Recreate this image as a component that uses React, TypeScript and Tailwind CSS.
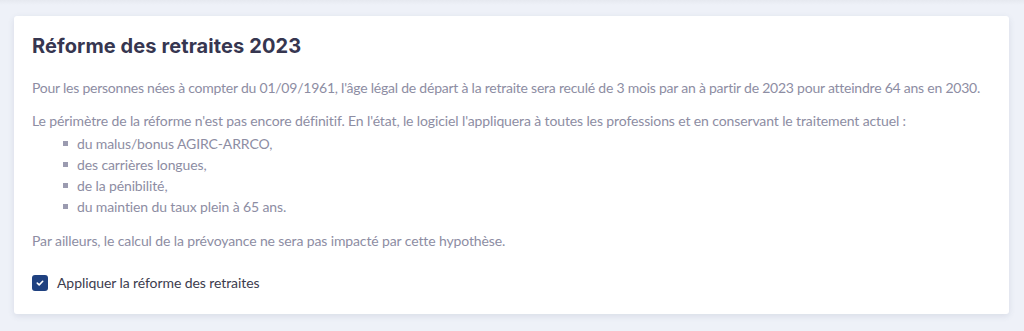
const ITEMS = [
  "du malus/bonus AGIRC-ARRCO,",
  "des carrières longues,",
  "de la pénibilité,",
  "du maintien du taux plein à 65 ans.",
];

export default function App() {
  return (
    <div
      className="relative h-[331px] w-[1024px] overflow-hidden bg-[#eef1f8] pl-[14px] pr-[15px] pt-[16px]"
      style={{ fontFamily: "'Lato', 'Liberation Sans', sans-serif" }}
    >
      <div className="absolute left-0 right-0 top-0 h-[5px] bg-gradient-to-b from-[#e6e9f0] to-transparent" />
      <div className="h-[298px] rounded-[3px] bg-white px-[18px] pt-[16px] shadow-[0_2px_6px_rgba(60,70,110,0.12)]">
        <h2
          className="text-[20px] font-bold leading-[28px] tracking-[0.1px] text-[#363650]"
          style={{ fontFamily: "'Inter', 'Liberation Sans', sans-serif" }}
        >
          Réforme des retraites 2023
        </h2>
        <div className="mt-[17px] text-[14px] leading-[21px] tracking-[-0.12px] text-[#8d8da3]">
          <p className="whitespace-nowrap tracking-[-0.23px]">
            Pour les personnes nées à compter du 01/09/1961, l'âge légal de départ à la retraite sera reculé de 3 mois par an à partir de 2023 pour atteindre 64 ans en 2030.
          </p>
          <p className="mt-[12px]">
            Le périmètre de la réforme n'est pas encore définitif. En l'état, le logiciel l'appliquera à toutes les professions et en conservant le traitement actuel :
          </p>
          <ul className="mt-[2px] pl-[31px]">
            {ITEMS.map((it) => (
              <li key={it} className="flex items-center">
                <span className="mr-[9px] h-[5px] w-[5px] bg-[#9b9bb0]" />
                <span>{it}</span>
              </li>
            ))}
          </ul>
          <p className="mt-[13px]">
            Par ailleurs, le calcul de la prévoyance ne sera pas impacté par cette hypothèse.
          </p>
        </div>
        <label className="mt-[21px] flex items-center gap-[9px] text-[14px] tracking-[-0.08px] text-[#3c3c4e]">
          <span className="flex h-[16px] w-[16px] items-center justify-center rounded-[3px] bg-[#1f4180]">
            <svg width="10" height="10" viewBox="0 0 10 10" fill="none">
              <path d="M2.3 5.1 L4.2 6.9 L7.7 3.3" stroke="white" strokeWidth="1.6" strokeLinecap="round" strokeLinejoin="round" />
            </svg>
          </span>
          Appliquer la réforme des retraites
        </label>
      </div>
    </div>
  );
}
